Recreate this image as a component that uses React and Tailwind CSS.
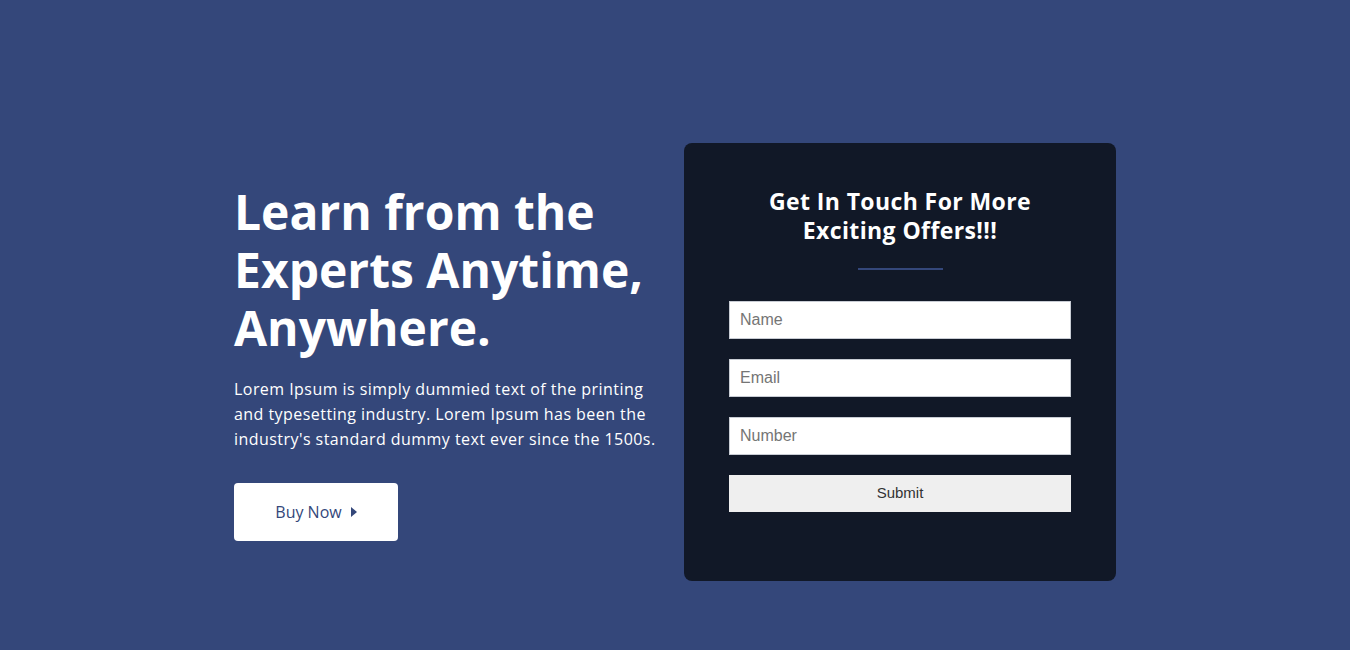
import React from 'react';

function CaretRight() {
  return (
    <svg width="6" height="10" viewBox="0 0 6 10" className="ml-[9px]">
      <path d="M0 0 L6 5 L0 10 Z" fill="currentColor" />
    </svg>
  );
}

function ContactCard() {
  const fields = ['Name', 'Email', 'Number'];

  return (
    <div className="w-[432px] rounded-lg bg-[#111827] px-[45px] pt-[44px] pb-[69px]">
      <h2 className="text-center text-[23px] leading-[29px] font-bold tracking-[0.4px] text-white">
        Get In Touch For More
        <br />
        Exciting Offers!!!
      </h2>
      <div className="mx-auto mt-[23px] h-[2px] w-[85px] bg-[#34477a]" />

      <form className="mt-[31px] flex flex-col gap-[20px]" onSubmit={e => e.preventDefault()}>
        {fields.map(f => (
          <input
            key={f}
            type="text"
            placeholder={f}
            className="h-[38px] w-full border border-[#c8ccd4] bg-white px-[10px] text-[16px] text-[#333] placeholder:text-[#757575] outline-none"
            style={{ fontFamily: '"Liberation Sans", Arial, sans-serif' }}
          />
        ))}
        <button
          type="submit"
          className="h-[37px] w-full bg-[#efefef] text-[15px] text-[#333]"
          style={{ fontFamily: '"Liberation Sans", Arial, sans-serif' }}
        >
          Submit
        </button>
      </form>
    </div>
  );
}

export default function App() {
  return (
    <div
      className="min-h-[650px] w-full bg-[#34477a] pt-[143px]"
      style={{ fontFamily: '"Open Sans", sans-serif' }}
    >
      <div className="mx-auto flex w-[882px] items-center">
        <div className="w-[450px] pr-[20px] text-white">
          <h1 className="text-[48px] leading-[58px] font-bold">
            Learn from the
            <br />
            Experts Anytime,
            <br />
            Anywhere.
          </h1>
          <p className="mt-[20px] text-[16px] leading-[25px] tracking-[0.45px] whitespace-nowrap">
            Lorem Ipsum is simply dummied text of the printing
            <br />
            and typesetting industry. Lorem Ipsum has been the
            <br />
            industry's standard dummy text ever since the 1500s.
          </p>
          <button className="mt-[31px] flex h-[58px] w-[164px] items-center justify-center rounded-[4px] bg-white text-[16px] text-[#34477a]">
            Buy Now
            <CaretRight />
          </button>
        </div>

        <ContactCard />
      </div>
    </div>
  );
}
